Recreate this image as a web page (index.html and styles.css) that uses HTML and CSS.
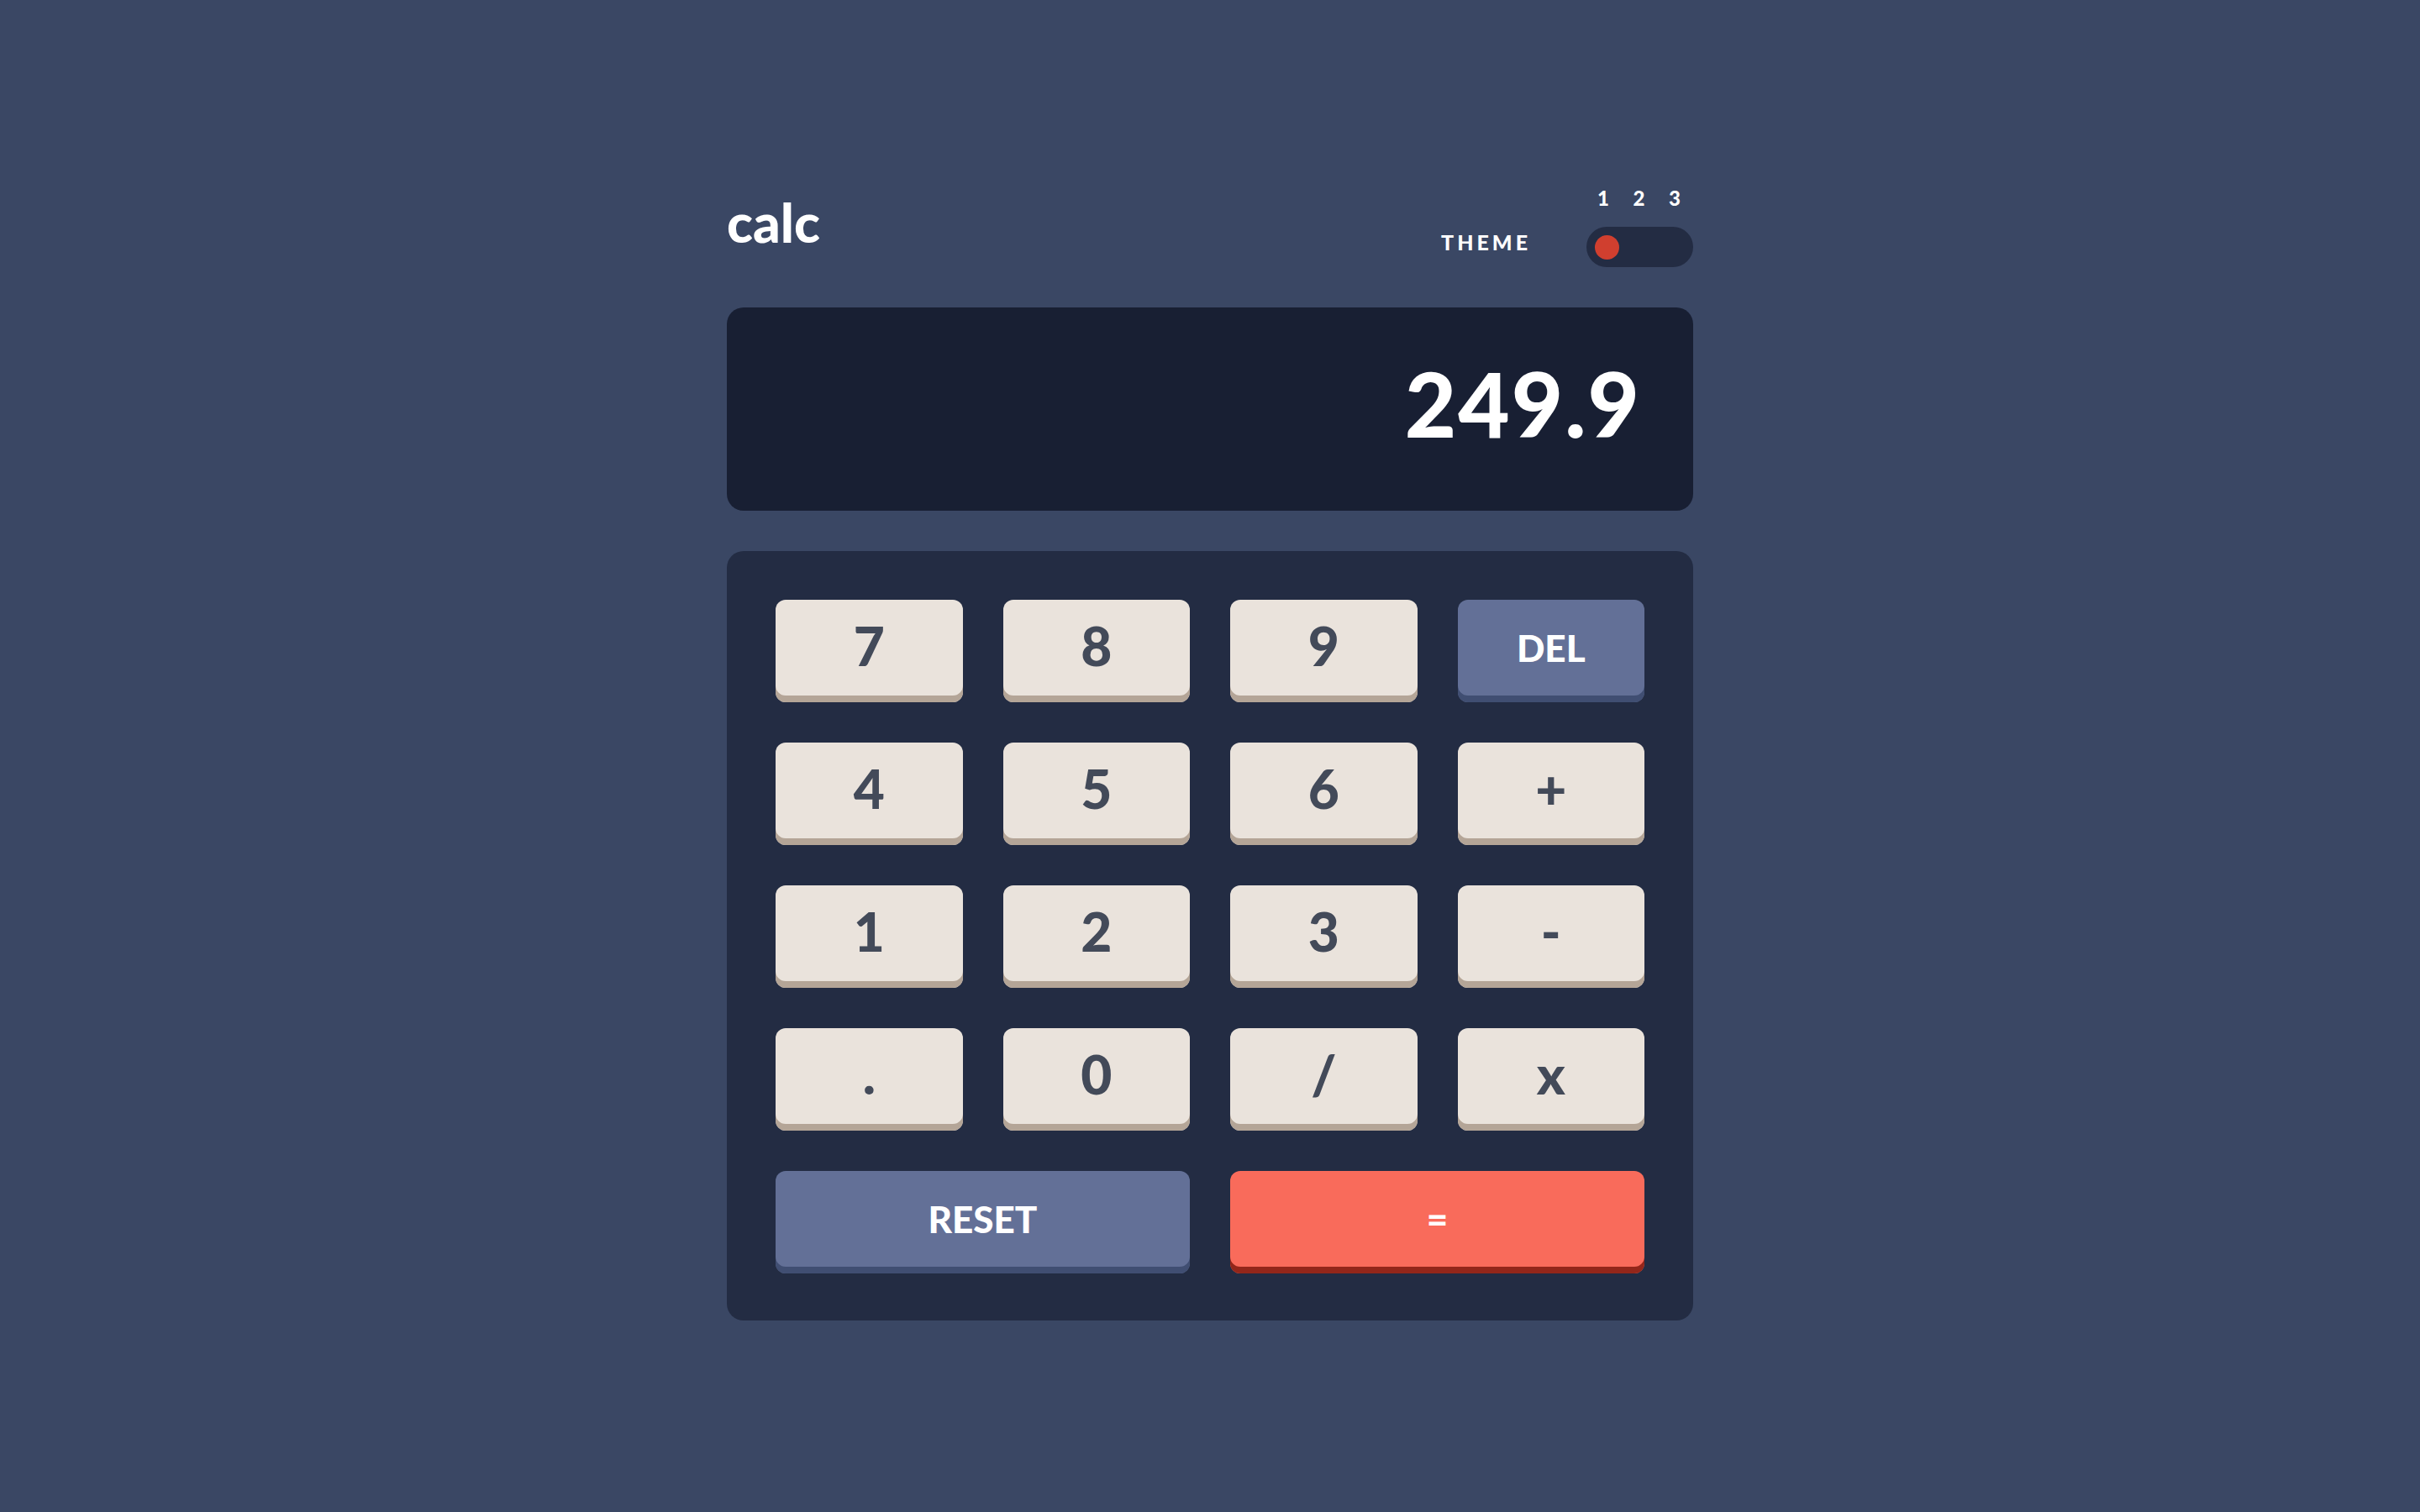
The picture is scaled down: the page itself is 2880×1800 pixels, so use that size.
FILE: index.html
```html
<!DOCTYPE html>
<html lang="en">
<head>
<meta charset="utf-8">
<title>calc</title>
<link rel="stylesheet" href="styles.css">
</head>
<body>
<main class="calc">
  <header class="header">
    <h1 class="logo">calc</h1>
    <div class="theme">
      <span class="theme-label">THEME</span>
      <div class="theme-switch">
        <div class="theme-nums"><span>1</span><span>2</span><span>3</span></div>
        <div class="toggle"><span class="dot"></span></div>
      </div>
    </div>
  </header>
  <section class="screen"><span class="value">249.9</span></section>
  <section class="keypad">
    <button class="key">7</button>
    <button class="key">8</button>
    <button class="key">9</button>
    <button class="key key-blue">DEL</button>
    <button class="key">4</button>
    <button class="key">5</button>
    <button class="key">6</button>
    <button class="key">+</button>
    <button class="key">1</button>
    <button class="key">2</button>
    <button class="key">3</button>
    <button class="key">-</button>
    <button class="key">.</button>
    <button class="key">0</button>
    <button class="key">/</button>
    <button class="key">x</button>
    <button class="key key-blue key-wide">RESET</button>
    <button class="key key-red key-wide">=</button>
  </section>
</main>
</body>
</html>
```
FILE: styles.css
```css
* { box-sizing: border-box; }
html, body { margin: 0; padding: 0; }
body {
  background: #3a4764;
  font-family: "Lato", "Liberation Sans", sans-serif;
  font-weight: 900;
  color: #ffffff;
  min-height: 1800px;
  padding-top: 224px;
}
.calc {
  width: 1150px;
  margin: 0 auto;
}
.header {
  display: flex;
  justify-content: space-between;
  align-items: flex-end;
  margin-bottom: 48px;
}
.logo {
  margin: 0 0 21px 0;
  font-size: 64px;
  line-height: 1;
  font-weight: 900;
  letter-spacing: 0;
}
.theme {
  display: flex;
  align-items: flex-end;
  gap: 66px;
}
.theme-label {
  font-size: 25px;
  line-height: 1;
  letter-spacing: 4px;
  margin-bottom: 17px;
}
.theme-switch {
  display: flex;
  flex-direction: column;
  width: 127px;
}
.theme-nums {
  display: flex;
  justify-content: space-between;
  padding: 0 15px 0 13px;
  font-size: 24px;
  line-height: 1;
  margin-bottom: 22px;
}
.toggle {
  height: 48px;
  border-radius: 24px;
  background: #232c43;
  padding: 10px;
  display: flex;
  align-items: center;
}
.dot {
  width: 29px;
  height: 29px;
  border-radius: 50%;
  background: #d03f2f;
}
.screen {
  height: 242px;
  background: #181f33;
  border-radius: 20px;
  display: flex;
  justify-content: flex-end;
  align-items: center;
  padding: 0 62px 14px 0;
  margin-bottom: 48px;
}
.value {
  font-size: 106px;
  line-height: 1;
  letter-spacing: 2px;
}
.keypad {
  background: #232c43;
  border-radius: 20px;
  padding: 58px 58px 56px;
  display: grid;
  grid-template-columns: repeat(4, 1fr);
  grid-auto-rows: 122px;
  column-gap: 48px;
  row-gap: 48px;
}
.key {
  border: 0;
  margin: 0;
  border-radius: 12px;
  background: #eae3dc;
  box-shadow: inset 0 -8px 0 #b4a597;
  color: #434a59;
  font-family: "Lato", "Liberation Sans", sans-serif;
  font-weight: 900;
  font-size: 64px;
  line-height: 1;
  padding: 0 0 12px 0;
  display: flex;
  align-items: center;
  justify-content: center;
}
.key-blue {
  background: #637097;
  box-shadow: inset 0 -8px 0 #404e72;
  color: #ffffff;
  font-size: 44px;
  padding-bottom: 8px;
}
.key-red {
  background: #f96b5b;
  box-shadow: inset 0 -8px 0 #93261a;
  color: #ffffff;
  font-size: 44px;
  padding-bottom: 8px;
}
.key-wide {
  grid-column: span 2;
}
```
